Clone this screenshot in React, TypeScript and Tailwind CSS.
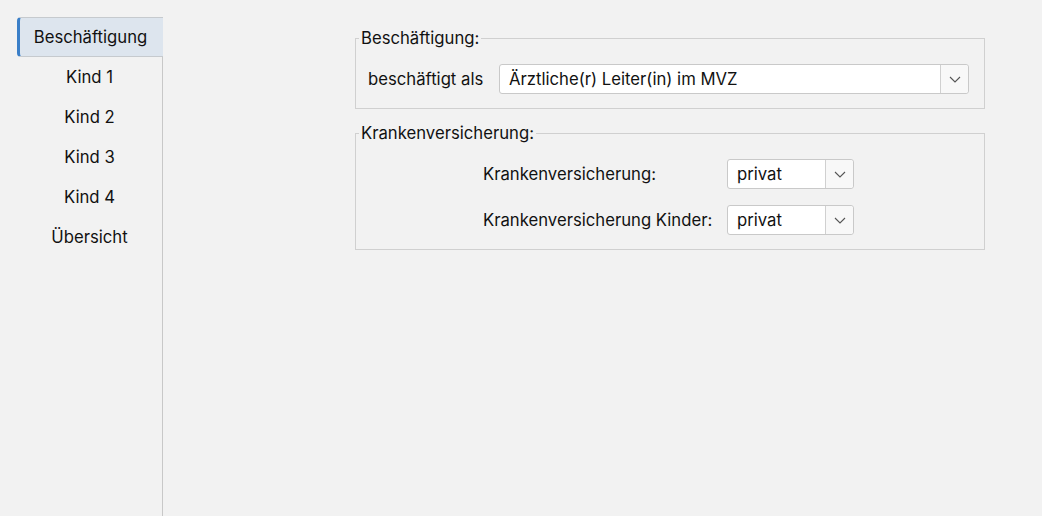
import React from "react";

const Chevron = () => (
  <svg width="12" height="7" viewBox="0 0 12 7" fill="none">
    <path d="M1 1l5 5 5-5" stroke="#555" strokeWidth="1.1" />
  </svg>
);

function Combo({ value, width }: { value: string; width: string }) {
  return (
    <div className={`flex h-[30px] ${width} rounded-[3px] border border-[#c9c9c9] bg-white`}>
      <div className="flex flex-1 items-center pl-[9px] pt-[1px] text-[#111]">{value}</div>
      <div className="flex w-[28px] items-center justify-center rounded-r-[3px] border-l border-[#d0d0d0] bg-[#f8f8f8]">
        <Chevron />
      </div>
    </div>
  );
}

export default function App() {
  const tabs = ["Kind 1", "Kind 2", "Kind 3", "Kind 4", "Übersicht"];
  return (
    <div
      className="flex h-[516px] w-[1042px] bg-[#f2f2f2] text-[16.7px] text-[#111]"
      style={{ fontFamily: "Inter, 'Noto Sans', sans-serif" }}
    >
      <div className="flex w-[163px] flex-col pl-[17px] pt-[17px]">
        <div className="flex h-[40px] items-center justify-center rounded-l-[4px] border-y border-[#c6cace] border-l-[3px] border-l-[#3b7fc8] bg-[#dde5ee] pr-[2px] pt-[1px]">
          Beschäftigung
        </div>
        {tabs.map((t) => (
          <div key={t} className="flex h-[40px] items-center justify-center border-r border-[#c8c8c8] pt-[2px]">
            {t}
          </div>
        ))}
        <div className="flex-1 border-r border-[#c8c8c8]" />
      </div>
      <div className="flex flex-col gap-[12px] pl-[192px] pt-[26px]">
        <fieldset className="w-[630px] border border-[#d0d0d0] pb-[14px] pt-[14px]">
          <legend className="ml-[3px] px-[2px] leading-[24px]">Beschäftigung:</legend>
          <div className="flex items-center px-[12px]">
            <span className="w-[131px] pt-[1px]">beschäftigt als</span>
            <Combo value="Ärztliche(r) Leiter(in) im MVZ" width="w-[470px]" />
          </div>
        </fieldset>
        <fieldset className="w-[630px] border border-[#d0d0d0] pb-[14px] pt-[14px]">
          <legend className="ml-[3px] px-[2px] leading-[24px]">Krankenversicherung:</legend>
          <div className="grid grid-cols-[244px_127px] gap-y-[16px] pl-[127px]">
            <span className="self-center pt-[1px]">Krankenversicherung:</span>
            <Combo value="privat" width="w-[127px]" />
            <span className="self-center pt-[1px]">Krankenversicherung Kinder:</span>
            <Combo value="privat" width="w-[127px]" />
          </div>
        </fieldset>
      </div>
    </div>
  );
}
